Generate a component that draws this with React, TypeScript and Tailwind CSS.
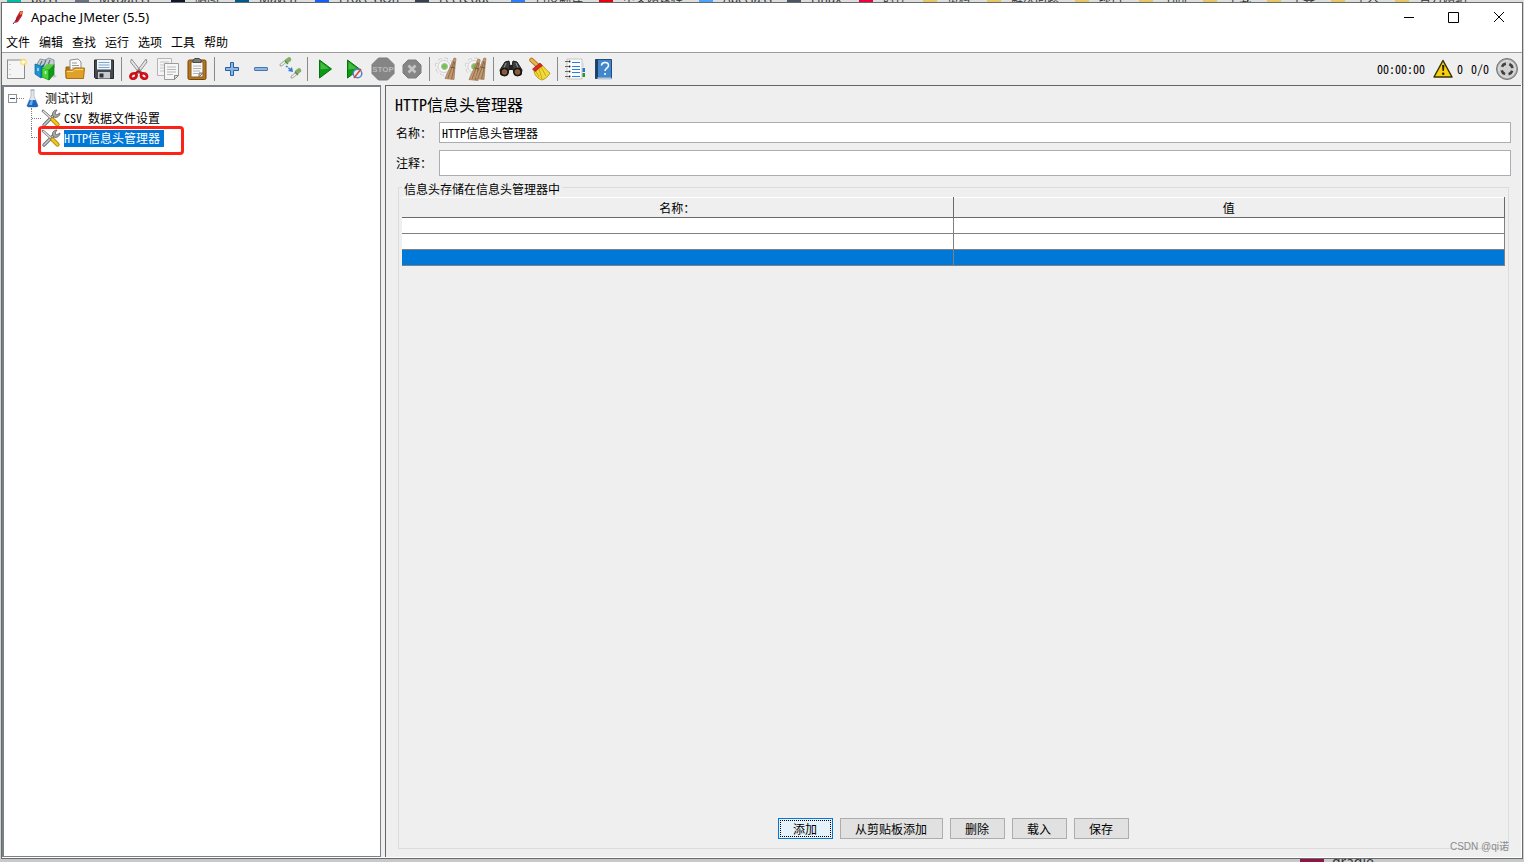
import type { ReactNode } from "react";

const bookmarks = [
  { label: "boss", slot: "w-17", icon: "bg-teal-500" },
  { label: "MyBatiss", slot: "w-24", icon: "bg-gray-500" },
  { label: "脑图", slot: "w-16", icon: "bg-gray-900" },
  { label: "Maven", slot: "w-20", icon: "bg-sky-800" },
  { label: "ProcessOn", slot: "w-25", icon: "bg-blue-600" },
  { label: "LeetCode", slot: "w-24", icon: "bg-gray-700" },
  { label: "百度翻译", slot: "w-22", icon: "bg-blue-500" },
  { label: "中文网课程", slot: "w-25", icon: "bg-red-600" },
  { label: "Apeclass", slot: "w-22", icon: "bg-blue-400" },
  { label: "Linux", slot: "w-18", icon: "bg-gray-600" },
  { label: "时径", slot: "w-16", icon: "bg-rose-600" },
  { label: "资料", slot: "w-16", icon: "bg-[#e6c765]" },
  { label: "解决问题", slot: "w-22", icon: "bg-[#e6c765]" },
  { label: "项目", slot: "w-16", icon: "bg-[#e6c765]" },
  { label: "书阁", slot: "w-16", icon: "bg-[#e6c765]" },
  { label: "下载", slot: "w-16", icon: "bg-[#e6c765]" },
  { label: "工具", slot: "w-16", icon: "bg-[#e6c765]" },
  { label: "个人", slot: "w-16", icon: "bg-[#e6c765]" },
  { label: "官方网站", slot: "w-22", icon: "bg-[#e6c765]" },
];

function Svg({ children, size = "size-6" }: { children: ReactNode; size?: string }) {
  return (
    <svg viewBox="0 0 24 24" className={`${size} shrink-0`} fill="none" aria-hidden="true">
      {children}
    </svg>
  );
}

const NewIcon = () => (
  <Svg>
    <rect x="2.500" y="3" width="17" height="18.500" fill="#f5f5f5" stroke="#8c8c8c" />
    <path d="M5 7v1M5 12v1M5 17v1" stroke="#aaa" />
    <circle cx="18.500" cy="5" r="3.600" fill="#f8e36a" opacity=".75" />
    <circle cx="18.500" cy="5" r="1.800" fill="#fffce0" />
  </Svg>
);

const TemplatesIcon = () => (
  <Svg>
    <path d="M3 7 6 2l5 1 4-2 5 2v8l-14 2z" fill="#c3cdd2" stroke="#78868c" strokeWidth=".8" />
    <path d="m6 8 2-4M10 8l2-5M14 8l2-5" stroke="#64747d" strokeWidth="1.200" />
    <path d="m1 7 6 2v12l-6-4z" fill="#1a96d6" stroke="#086292" strokeWidth=".7" />
    <path d="m7 9 3-2v13l-3 1z" fill="#0670a8" />
    <path d="m8 11 7 1.500V23l-7-3z" fill="#46d638" stroke="#16920f" strokeWidth=".7" />
    <path d="m15 12.500 5-5v10L15 23z" fill="#149a18" stroke="#087810" strokeWidth=".7" />
    <path d="m8 11 5-4 7 .5-5 5z" fill="#5fc948" />
    <path d="m20 18 3 1-4 2z" fill="#888" opacity=".5" />
    <path d="M4 11v3M11.500 14v3" stroke="#fff" strokeWidth="1.500" opacity=".7" />
  </Svg>
);

const OpenIcon = () => (
  <Svg>
    <path d="M3 10h5l2 2h10v9H3z" fill="#b87912" stroke="#986008" />
    <path d="m7 3 8-1 3 3v9H7z" fill="#fafafa" stroke="#8f8f8f" />
    <path d="M9 6h5M9 8.500h7M9 11h7" stroke="#999" />
    <path d="M2.500 13h7l2-2h10l-1 10.500h-17z" fill="#e0a02c" stroke="#ad7109" />
    <path d="M4 14.500h6l2-2h8" stroke="#ffd978" />
  </Svg>
);

const SaveIcon = () => (
  <Svg>
    <path d="M2.500 3h19v18.500h-18l-1-1z" fill="#444a50" stroke="#24282c" />
    <path d="M5 3h14v9.500H5z" fill="#eef5fb" />
    <path d="M6.500 5.500h11M6.500 8h11M6.500 10.500h11" stroke="#84a7c7" />
    <path d="M6 15h12v6.500H6z" fill="#c7cbce" />
    <path d="M7.500 16.500h4v4h-4z" fill="#303439" />
  </Svg>
);

const CutIcon = () => (
  <Svg>
    <path d="m4.500 2 11 14-2.500 1L3.500 5zM19 2 8.500 16l2.500 1 9-12z" fill="#e4e4e4" stroke="#858585" strokeWidth=".9" />
    <ellipse cx="6.500" cy="19" rx="3.200" ry="2.500" transform="rotate(-30 6.500 19)" stroke="#d01018" strokeWidth="2.800" />
    <ellipse cx="17" cy="19" rx="3.200" ry="2.500" transform="rotate(30 17 19)" stroke="#d01018" strokeWidth="2.800" />
    <path d="m8 17 3.500-3 4 3" stroke="#c90b12" strokeWidth="2" />
    <circle cx="12" cy="13" r="1" fill="#777" />
  </Svg>
);

const CopyIcon = () => (
  <Svg>
    <path d="M1.500 1.500h14v17h-14z" fill="#f4f4f4" stroke="#b5b5b5" />
    <path d="M4 5h9M4 8h4M4 11h4M4 14h4" stroke="#c4c4c4" />
    <path d="M8.500 6.500h14v12l-4 4h-10z" fill="#f6f6f6" stroke="#9c9c9c" />
    <path d="M11 10h9M11 12.500h9M11 15h9M11 17.500h6" stroke="#b8b8b8" />
    <path d="M18.500 22.500v-4h4z" fill="#ddd" stroke="#888" />
  </Svg>
);

const PasteIcon = () => (
  <Svg>
    <rect x="3" y="3" width="18" height="19.500" rx="1.500" fill="#b8761b" stroke="#704506" />
    <path d="M6 5h12v15H6z" fill="#f8f8f8" stroke="#87602a" />
    <path d="M8 5.500V3l2-1.500h4L16 3v2.500z" fill="#777b77" stroke="#494c49" />
    <path d="M8 9h8M8 11.500h8M8 14h7M8 16.500h5" stroke="#b4b4b4" />
    <path d="M14 20v-4h4z" fill="#cdcdcd" stroke="#777" />
  </Svg>
);

const PlusIcon = () => (
  <Svg>
    <path d="M10.500 5.500h3v5h5v3h-5v5h-3v-5h-5v-3h5z" fill="#8db7e2" stroke="#285fa6" strokeLinejoin="round" />
  </Svg>
);

const MinusIcon = () => (
  <Svg>
    <rect x="5.500" y="10.500" width="13" height="3" rx=".5" fill="#8db7e2" stroke="#4478b5" />
  </Svg>
);

const ToggleIcon = () => (
  <Svg>
    <path d="m3 8 5-4M14 20l5-4" stroke="#a4aaa0" strokeWidth="3" strokeLinecap="round" />
    <path d="m3 8 5-4M14 20l5-4" stroke="#f4f4f4" strokeWidth="1.600" />
    <path d="m9 4 2-1.500M19 15l2-1.500" stroke="#7fae6a" strokeWidth="4.500" strokeLinecap="round" />
    <path d="m7 4 3 3M17 15l3 3" stroke="#5b8a4b" strokeWidth="1.200" />
    <path d="m8 9 5 4" stroke="#3985df" strokeWidth="1.600" strokeDasharray="2 1" />
    <path d="m15 15-5-1 4-4z" fill="#3478d5" />
  </Svg>
);

const PlayShape = () => (
  <>
    <path d="M6.500 3v18L18.500 12z" fill="#0a9a13" stroke="#067309" strokeLinejoin="round" />
    <path d="M7.500 5 16 11.500l-8.500 1z" fill="#63cc5b" opacity=".65" />
  </>
);

const StartIcon = () => (
  <Svg>
    <PlayShape />
  </Svg>
);

const StartNowIcon = () => (
  <Svg>
    <g transform="translate(-1 0)"><PlayShape /></g>
    <circle cx="15.500" cy="16.500" r="4.300" fill="#e8edf7" stroke="#5384c2" strokeWidth="1.500" />
    <path d="m12 21 7-9" stroke="#df3b31" strokeWidth="1.400" />
  </Svg>
);

const StopIcon = () => (
  <Svg>
    <path d="M7.500 1h9L23 7.500v9L16.500 23h-9L1 16.500v-9z" fill="#858585" stroke="#7c7c7c" />
    <text x="12" y="15" textAnchor="middle" fontFamily="Liberation Sans Narrow, Liberation Sans" fontWeight="700" fontSize="8" fill="#b9b9b9">STOP</text>
  </Svg>
);

const ShutdownIcon = () => (
  <Svg>
    <path d="M8 3h8l5 5v8l-5 5H8l-5-5V8z" fill="#858585" stroke="#7c7c7c" />
    <path d="m8.500 8.500 7 7m0-7-7 7" stroke="#c4c4c4" strokeWidth="2.600" />
  </Svg>
);

const Gear = () => (
  <>
    <circle cx="9" cy="9.500" r="7.500" stroke="#c2c2c2" strokeWidth="3" strokeDasharray="3.300 2.590" />
    <circle cx="9" cy="9.500" r="7.200" stroke="#f6f6f6" strokeWidth="2.200" strokeDasharray="2.800 2.855" />
    <circle cx="9" cy="9.500" r="6" fill="#f6f6f6" stroke="#d2d2d2" />
    <circle cx="9.500" cy="9.500" r="3" fill="#6fc943" stroke="#b1b1b1" />
  </>
);

const Bristles = () => (
  <>
    <path d="m19 1 2 .5-1 8-1 13-9-1 5-11z" fill="#c09a72" stroke="#9a7350" strokeWidth=".7" />
    <path d="m19 4-3 9-3 8M19.500 5l-1 9-2 8" stroke="#86603d" strokeWidth=".8" />
    <path d="m15.500 10 4.500 1" stroke="#75543a" />
  </>
);

const ClearIcon = () => (
  <Svg>
    <Gear />
    <Bristles />
  </Svg>
);

const ClearAllIcon = () => (
  <Svg>
    <g transform="translate(1 0)"><Gear /></g>
    <g transform="translate(-5 1)"><Bristles /></g>
    <g transform="translate(1 0)"><Bristles /></g>
  </Svg>
);

const SearchIcon = () => (
  <Svg>
    <path d="m6 5 4-1 1 5-2 7-7 2-1-5zM18 5l-4-1-1 5 2 7 7 2 1-5z" fill="#3c3c3c" stroke="#1c1c1c" />
    <path d="M10 8h4v5h-4z" fill="#222" />
    <path d="m7 6-2 5m12-5 2 5" stroke="#9a9a9a" />
    <circle cx="5.500" cy="15" r="4" fill="#22201f" stroke="#111" />
    <circle cx="18.500" cy="15" r="4" fill="#22201f" stroke="#111" />
    <circle cx="5.500" cy="15" r="2.300" fill="#8c5737" stroke="#a56d48" strokeWidth=".8" />
    <circle cx="18.500" cy="15" r="2.300" fill="#8c5737" stroke="#a56d48" strokeWidth=".8" />
  </Svg>
);

const BroomIcon = () => (
  <Svg>
    <path d="m3.500 3 5.500 5" stroke="#b57a1d" strokeWidth="4.500" strokeLinecap="round" />
    <path d="m3.500 3 5.500 5" stroke="#e8b554" strokeWidth="2.600" strokeLinecap="round" />
    <path d="m6 13 7-5c3 1 5 5 9 8-2 4-5 6-8 7-4-1-8-5-8-10z" fill="#f1d938" stroke="#a98b0a" strokeWidth=".8" />
    <path d="m8 14 3 6m0-8 3 10m-1-12 5 9" stroke="#c4a91c" />
    <path d="m4.500 12 7.500-6 2.500 2.500L7 14.500z" fill="#d82820" stroke="#99120e" strokeWidth=".6" />
  </Svg>
);

const FunctionsIcon = () => (
  <Svg>
    <path d="M4 2h15v20H4z" fill="#fcfcfc" stroke="#c4c4c4" />
    <path d="M2 4.500h3.500m-3.500 5h3.500m-3.500 5h3.500m-3.500 5h3.500" stroke="#666" />
    <circle cx="6.500" cy="4.500" r="1" fill="#222" />
    <circle cx="6.500" cy="9.500" r="1" fill="#222" />
    <circle cx="6.500" cy="14.500" r="1" fill="#222" />
    <circle cx="6.500" cy="19.500" r="1" fill="#222" />
    <path d="M9 5.500h8M9 9.500h8M9 12.500h8M9 15.500h8M9 19.500h8" stroke="#2580e2" />
    <path d="M19.500 6h1.500v4h-1.500z" fill="#ddd" />
    <path d="M19.500 11H22v4h-2.500z" fill="#2577d0" />
    <path d="M19.500 16H22v4h-2.500z" fill="#27942c" />
  </Svg>
);

const HelpIcon = () => (
  <Svg>
    <path d="M3.500 2.500h16v19h-16z" fill="#4286cb" stroke="#224b78" />
    <path d="M3.500 2.500H6v19H3.500z" fill="#1e3e62" />
    <path d="M5 20.500h14.500v2H6z" fill="#b9c7d4" />
    <path d="M9.500 8.500c.2-4 7-4 7 0 0 2.700-3.500 2.600-3.500 5.500" stroke="#fff" strokeWidth="1.500" />
    <circle cx="13" cy="17" r="1" fill="#fff" />
  </Svg>
);

const toolGroups = [
  [
    { name: "新建", Icon: NewIcon },
    { name: "模板", Icon: TemplatesIcon },
    { name: "打开", Icon: OpenIcon },
    { name: "保存", Icon: SaveIcon },
  ],
  [
    { name: "剪切", Icon: CutIcon },
    { name: "复制", Icon: CopyIcon },
    { name: "粘贴", Icon: PasteIcon },
  ],
  [
    { name: "展开", Icon: PlusIcon },
    { name: "折叠", Icon: MinusIcon },
    { name: "切换", Icon: ToggleIcon },
  ],
  [
    { name: "启动", Icon: StartIcon },
    { name: "不停顿开始", Icon: StartNowIcon },
    { name: "停止", Icon: StopIcon },
    { name: "关闭", Icon: ShutdownIcon },
  ],
  [
    { name: "清除", Icon: ClearIcon },
    { name: "清除全部", Icon: ClearAllIcon },
  ],
  [
    { name: "查找", Icon: SearchIcon },
    { name: "重置搜索", Icon: BroomIcon },
  ],
  [
    { name: "函数助手", Icon: FunctionsIcon },
    { name: "帮助", Icon: HelpIcon },
  ],
];

const ToolsIcon = () => (
  <svg viewBox="0 0 20 20" className="size-5 shrink-0" fill="none" aria-hidden="true">
    <path d="m3 17 10-10" stroke="#6d6d6d" strokeWidth="3.400" strokeLinecap="round" />
    <path d="m3 17 10-10" stroke="#c9c9c9" strokeWidth="1.600" strokeLinecap="round" />
    <path d="M12 8c-1.500-3 .5-6 4-6l-2 3 1.500 2L19 5c0 3-3.500 5.500-6 4z" fill="#a9a9a9" stroke="#5a5a5a" strokeWidth=".8" />
    <path d="m2 3 8 7" stroke="#777" strokeWidth="2.600" strokeLinecap="round" />
    <path d="m2 3 8 7" stroke="#e4e4e4" strokeWidth="1.200" />
    <path d="m11.500 11.500 5 5" stroke="#a67900" strokeWidth="4.200" strokeLinecap="round" />
    <path d="m11.500 11.500 5 5" stroke="#f0c51e" strokeWidth="2.600" strokeLinecap="round" />
  </svg>
);

const FlaskIcon = () => (
  <svg viewBox="0 0 16 20" className="h-5 w-4 shrink-0" fill="none" aria-hidden="true">
    <path d="M7 2v6L3 17.500c0 1 1 1.500 2 1.500h7c1 0 2-.5 2-1.500L10 8V2z" fill="#dfe8f0" stroke="#a6b2be" strokeWidth=".8" />
    <path d="M5.500 12 3 17.500c0 1 1 1.500 2 1.500h7c1 0 2-.5 2-1.500L11.500 12z" fill="#1c66c6" />
    <path d="m7 12-2 5h3l1-5z" fill="#69b0f3" />
    <path d="M6.500 2h4" stroke="#9aa6b2" />
  </svg>
);

function Header() {
  return (
    <header className="flex h-[30px] shrink-0 items-center bg-white pl-2">
      <svg viewBox="0 0 16 16" className="mr-[5px] size-4" aria-hidden="true">
        <path d="M6 8 10 1h3l-1 5-4 6-3 1z" fill="#c62433" />
        <path d="m10 2 2-1 1 2-3 2z" fill="#e88a2e" />
        <path d="m7 9-4 5M10 5 6 11" stroke="#741b46" strokeWidth="1" />
      </svg>
      <h1 className="font-['Noto_Sans','Noto_Sans_CJK_SC',sans-serif] text-[13px]">Apache JMeter (5.5)</h1>
      <div className="ml-auto flex h-full">
        <button aria-label="最小化" className="flex w-[45px] items-center justify-center">
          <svg viewBox="0 0 12 12" className="size-3" aria-hidden="true"><path d="M1 5.500h10" stroke="#000" /></svg>
        </button>
        <button aria-label="最大化" className="flex w-[45px] items-center justify-center">
          <svg viewBox="0 0 12 12" className="size-3" aria-hidden="true"><path d="M.5.500h10v10H.5z" fill="none" stroke="#000" /></svg>
        </button>
        <button aria-label="关闭窗口" className="flex w-[46px] items-center justify-center">
          <svg viewBox="0 0 12 12" className="size-3" aria-hidden="true"><path d="m1 0 10 10m0-10L1 10" stroke="#000" /></svg>
        </button>
      </div>
    </header>
  );
}

function Toolbar() {
  return (
    <div className="flex h-8 shrink-0 items-center">
      {toolGroups.map((group, i) => (
        <div key={i} className="flex items-center">
          {i > 0 && (
            <div className="flex w-1.5 justify-center">
              <div className="h-6 w-px bg-[#8a8a8a]" />
            </div>
          )}
          {group.map(({ name, Icon }) => (
            <button key={name} aria-label={name} className="flex w-[29px] justify-center">
              <Icon />
            </button>
          ))}
        </div>
      ))}
      <div className="ml-auto flex items-center pr-[3px]">
        <span className="mr-2">00:00:00</span>
        <svg viewBox="0 0 20 20" className="mr-1 size-5" aria-hidden="true">
          <path d="M10 1.500 19 18H1z" fill="#f8cf0c" stroke="#3a3206" strokeWidth="1.500" strokeLinejoin="round" />
          <path d="M9 6h2.400l-.5 6H9.500z" fill="#2c2605" />
          <circle cx="10.200" cy="14.800" r="1.300" fill="#2c2605" />
        </svg>
        <span className="mr-2">0</span>
        <span className="mr-1.5">0/0</span>
        <Svg>
          <circle cx="12" cy="12" r="10.500" fill="#a5a5a5" stroke="#777" />
          <circle cx="12" cy="12" r="8.500" fill="#d0d0d0" stroke="#e2e2e2" />
          <circle cx="12" cy="12" r="5.500" stroke="#404040" strokeWidth="2.600" strokeDasharray="5 3.640" strokeDashoffset="-1.800" />
        </Svg>
      </div>
    </div>
  );
}

function TestTree() {
  return (
    <nav aria-label="测试计划树" className="w-[379px] shrink-0 border-t-2 border-r border-b border-l-2 border-[#7a8087] bg-white pt-px pl-1">
      <div className="flex h-5 items-center">
        <button aria-label="折叠测试计划" className="flex size-[9px] items-center justify-center border border-[#919191] bg-white">
          <span className="h-px w-[5px] bg-[#33539c]" />
        </button>
        <span className="w-[7px] border-t border-dotted border-[#808080]" />
        <FlaskIcon />
        <span className="ml-[5px]">测试计划</span>
      </div>
      <ul className="relative ml-[23px]">
        <li className="flex h-5 items-center">
          <span className="h-full w-2.5 border-l border-dotted border-[#808080] pt-2.5">
            <span className="block border-t border-dotted border-[#808080]" />
          </span>
          <ToolsIcon />
          <span className="ml-[3px]">CSV 数据文件设置</span>
        </li>
        <li className="flex h-5 items-center">
          <span className="mb-2.5 h-2.5 w-2.5 border-b border-l border-dotted border-[#808080]" />
          <ToolsIcon />
          <span className="ml-[3px] h-[17px] bg-[#0078d7] pr-1 leading-4 text-white">HTTP信息头管理器</span>
        </li>
        <li aria-hidden="true" className="pointer-events-none absolute top-[18px] left-[7px] h-[29px] w-[146px] rounded-sm border-3 border-[#fb2318]" />
      </ul>
    </nav>
  );
}

function Action({ children, focused = false }: { children: string; focused?: boolean }) {
  return (
    <button
      className={
        focused
          ? "h-[21px] border border-[#0078d7] bg-[#e5f1fb] p-px"
          : "h-[21px] border border-[#adadad] bg-[#e1e1e1] pr-[15px] pl-3.5 leading-[19px]"
      }
    >
      {focused ? (
        <span className="block border border-dotted border-black pr-[13px] pl-3 leading-[15px]">{children}</span>
      ) : (
        children
      )}
    </button>
  );
}

function HeaderManager() {
  return (
    <main className="flex min-w-0 flex-1 flex-col border-t border-l border-[#666] bg-[#efefef] pt-1.5 pr-2.5 pb-2 pl-[9px]">
      <h2 className="mb-1.5 h-6 text-base leading-6">HTTP信息头管理器</h2>
      <div className="mb-[7px] flex items-center">
        <label htmlFor="name" className="w-11 pl-px">名称：</label>
        <input id="name" defaultValue="HTTP信息头管理器" className="h-[21px] min-w-0 flex-1 border border-[#abadb3] bg-white px-0.5" />
      </div>
      <div className="mb-1 flex items-center">
        <label htmlFor="comment" className="w-11 pl-px">注释：</label>
        <input id="comment" className="h-[26px] min-w-0 flex-1 border border-[#abadb3] bg-white px-0.5" />
      </div>
      <fieldset className="mr-0.5 ml-[3px] flex min-h-0 min-w-0 flex-1 flex-col border border-[#dcdcdc] px-[3px] pb-[9px]">
        <legend className="h-3.5 px-0.5 leading-[18px]">信息头存储在信息头管理器中</legend>
        <table className="mt-[3px] w-full table-fixed border-collapse">
          <thead>
            <tr className="h-5 border-t border-b border-t-white border-b-[#696969]">
              <th className="border-r border-r-[#696969] p-0 font-normal">名称：</th>
              <th className="border-r border-r-[#696969] p-0 font-normal">值</th>
            </tr>
          </thead>
          <tbody>
            {["bg-white", "bg-white", "bg-[#0078d7]"].map((color, i) => (
              <tr key={i} className={`h-4 border-b border-[#808080] ${color}`}>
                <td className="border-r border-[#808080] p-0" />
                <td className="border-r border-[#808080] p-0" />
              </tr>
            ))}
          </tbody>
        </table>
        <div className="mt-auto flex justify-center gap-[7px]">
          <Action focused>添加</Action>
          <Action>从剪贴板添加</Action>
          <Action>删除</Action>
          <Action>载入</Action>
          <Action>保存</Action>
        </div>
      </fieldset>
    </main>
  );
}

export default function App() {
  return (
    <div className="relative flex h-screen flex-col overflow-hidden bg-[#cfd0d0] font-['Noto_Sans_Mono_CJK_SC','Noto_Sans_CJK_SC',monospace] text-xs text-black">
      <div className="flex h-0.5 shrink-0 items-end overflow-hidden bg-[#dedede] pl-[7px] font-['Noto_Sans','Noto_Sans_CJK_SC',sans-serif] text-[#333]">
        {bookmarks.map(({ label, slot, icon }) => (
          <div key={label} className={`flex shrink-0 items-end gap-2.5 ${slot}`}>
            <span className={`h-3 w-3.5 ${icon}`} />
            <span className="leading-1.5 whitespace-nowrap">{label}</span>
          </div>
        ))}
      </div>
      <div className="mr-px ml-px flex min-h-0 flex-1 flex-col border border-[#666b6b] bg-[#efefef]">
        <Header />
        <nav aria-label="菜单" className="flex h-5 shrink-0 items-center gap-[9px] border-b border-[#9c9c9c] bg-white pb-0.5 pl-1 font-['Noto_Sans_CJK_SC',sans-serif]">
          {["文件", "编辑", "查找", "运行", "选项", "工具", "帮助"].map((item) => (
            <button key={item}>{item}</button>
          ))}
        </nav>
        <Toolbar />
        <div className="flex min-h-0 flex-1 gap-1 border-r border-b border-white">
          <TestTree />
          <HeaderManager />
        </div>
      </div>
      <div className="flex h-[3px] shrink-0 items-start justify-end gap-2 overflow-hidden bg-[#c9c9c9] pr-[150px] font-['Noto_Sans',sans-serif] text-sm text-[#333]">
        <span className="h-4 w-6 bg-[#8e1649]" />
        <span className="leading-1.5">gradle</span>
      </div>
      <div className="pointer-events-none absolute right-[15px] bottom-2 font-['Liberation_Sans','Noto_Sans_CJK_SC',sans-serif] text-[10px] leading-3.5 text-[#8b8b8b]">CSDN @qi诺</div>
    </div>
  );
}
